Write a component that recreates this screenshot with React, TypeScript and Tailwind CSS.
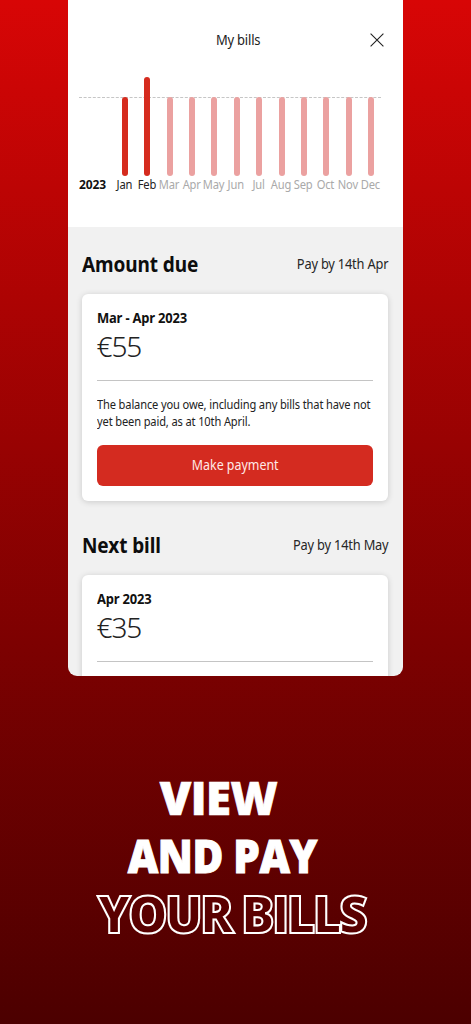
import React from "react";

interface Month {
  name: string;
  paid: boolean;
  height: number;
}

interface BillProps {
  title: string;
  payBy: string;
  period: string;
  amount: string;
  children?: React.ReactNode;
}

const months: Month[] = [
  { name: "Jan", paid: true, height: 79 },
  { name: "Feb", paid: true, height: 99 },
  { name: "Mar", paid: false, height: 79 },
  { name: "Apr", paid: false, height: 79 },
  { name: "May", paid: false, height: 79 },
  { name: "Jun", paid: false, height: 79 },
  { name: "Jul", paid: false, height: 79 },
  { name: "Aug", paid: false, height: 79 },
  { name: "Sep", paid: false, height: 79 },
  { name: "Oct", paid: false, height: 79 },
  { name: "Nov", paid: false, height: 79 },
  { name: "Dec", paid: false, height: 79 },
];

const BillChart = () => {
  return (
    <div className="relative mt-[77px] ml-[11px] w-[303px]">
      <svg className="absolute top-[20px] left-0 w-[302px] h-px" viewBox="0 0 302 1">
        <path d="M0 .5H302" stroke="#c6c6c6" strokeWidth="1" strokeDasharray="3 1.6" />
      </svg>
      <div className="relative flex items-end pl-[34.5px]">
        {months.map((month) => (
          <div key={month.name} className="flex flex-col items-center w-[22.42px] shrink-0">
            <div
              className={`w-[6px] rounded-full ${month.paid ? "bg-[#d52b1e]" : "bg-[#eba1a0]"}`}
              style={{ height: month.height }}
            />
            <span
              className={`h-[18px] mr-px scale-x-[.93] text-[12px] leading-[18px] tracking-[-0.2px] whitespace-nowrap ${
                month.paid ? "text-[#222]" : "text-[#a9a9a9]"
              }`}
            >
              {month.name}
            </span>
          </div>
        ))}
      </div>
      <span className="absolute bottom-0 left-0 text-[12px] leading-[18px] font-bold tracking-[-0.15px] text-[#111]">
        2023
      </span>
    </div>
  );
};

const Bill = ({ title, payBy, period, amount, children }: BillProps) => {
  return (
    <section>
      <div className="flex items-center justify-between h-[67px]">
        <h2 className="mt-[6px] origin-left scale-x-[.905] text-[21px] leading-7 font-bold tracking-[-0.1px] text-[#0d0d0d] whitespace-nowrap">
          {title}
        </h2>
        <span className="mt-[8px] origin-right scale-x-[.95] text-[13.5px] tracking-[-0.2px] text-[#262626] whitespace-nowrap">
          {payBy}
        </span>
      </div>
      <div className="h-[207px] rounded-md bg-white px-[15px] shadow-[0_1px_6px_rgba(0,0,0,0.16)]">
        <h3 className="pt-[14px] origin-left scale-x-[.96] text-[13.5px] leading-5 font-bold tracking-[-0.2px] text-[#111]">
          {period}
        </h3>
        <p className="text-[28px] leading-[37px] font-light tracking-[-1.1px] text-[#222]">{amount}</p>
        <div className="mt-[15px] h-px bg-[#c4c4c4]" />
        {children}
      </div>
    </section>
  );
};

export default function App() {
  return (
    <main className="flex flex-col items-center h-[1024px] w-[471px] overflow-hidden bg-linear-to-b from-[#d80606] to-[#4c0000] [font-family:'Noto_Sans',sans-serif]">
      <div className="w-[335px] h-[676px] shrink-0 overflow-hidden rounded-b-[9px] bg-[#f1f1f1]">
        <div className="relative h-[227px] bg-white">
          <div className="absolute top-[30px] w-full flex justify-center">
            <h1 className="ml-[5px] scale-x-[.96] text-[13.5px] leading-5 tracking-[-0.2px] text-[#222]">My bills</h1>
          </div>
          <svg className="absolute top-[33px] right-[19px] size-[14px]" viewBox="0 0 14 14" fill="none">
            <path d="M.6 .6L13.4 13.4M13.4 .6L.6 13.4" stroke="#222" strokeWidth="1.1" />
          </svg>
          <div className="flex">
            <BillChart />
          </div>
        </div>
        <div className="pl-[13.5px] pr-[15px]">
          <Bill title="Amount due" payBy="Pay by 14th Apr" period="Mar - Apr 2023" amount="€55">
            <p className="mt-[16px] origin-left scale-x-[.925] text-[12px] leading-[16.5px] tracking-[-0.15px] text-[#222] whitespace-nowrap">
              The balance you owe, including any bills that have not
              <br />
              yet been paid, as at 10th April.
            </p>
            <button className="mt-[14.5px] w-full h-[41px] rounded-md bg-[#d42b20] text-[13.5px] text-[#ffe9e7]">
              <span className="inline-block scale-x-[.92]">Make payment</span>
            </button>
          </Bill>
          <div className="mt-[7px]">
            <Bill title="Next bill" payBy="Pay by 14th May" period="Apr 2023" amount="€35" />
          </div>
        </div>
      </div>
      <div className="mt-[93px] flex flex-col items-center text-[45.5px] leading-[57.5px] font-extrabold text-white whitespace-nowrap [font-family:'Open_Sans',sans-serif]">
        <span className="mr-[34px] tracking-[-0.5px] [-webkit-text-stroke:0.7px_white]">VIEW</span>
        <span className="mr-[26px] tracking-[-0.5px] scale-x-[.925] [-webkit-text-stroke:1px_white]">AND PAY</span>
        <span className="mr-[9px] scale-x-[.96] text-[52px] text-transparent tracking-[-2.9px] [-webkit-text-stroke:2.1px_white]">
          YOUR BILLS
        </span>
      </div>
    </main>
  );
}
